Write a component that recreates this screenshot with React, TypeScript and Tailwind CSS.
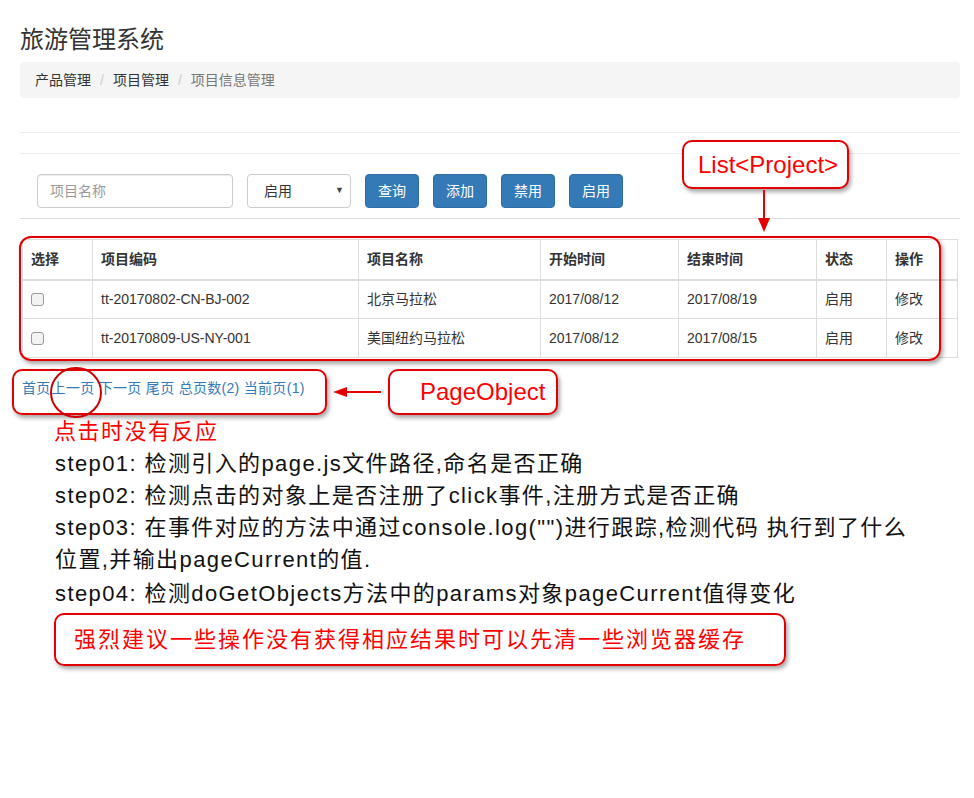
import React from 'react';

const rows = [
  { code: 'tt-20170802-CN-BJ-002', name: '北京马拉松', start: '2017/08/12', end: '2017/08/19', state: '启用' },
  { code: 'tt-20170809-US-NY-001', name: '美国纽约马拉松', start: '2017/08/12', end: '2017/08/15', state: '启用' },
];

const cols = ['w-[70px]', 'w-[266px]', 'w-[182px]', 'w-[138px]', 'w-[138px]', 'w-[70px]', 'w-[71px]'];

const steps = [
  'step01: 检测引入的page.js文件路径,命名是否正确',
  'step02: 检测点击的对象上是否注册了click事件,注册方式是否正确',
  'step03: 在事件对应的方法中通过console.log("")进行跟踪,检测代码 执行到了什么',
  '位置,并输出pageCurrent的值.',
];

export default function App() {
  return (
    <div className="relative w-[974px] min-h-[798px] bg-white text-[#333] font-['Liberation_Sans','Noto_Sans_CJK_SC',sans-serif]">
      <div className="pl-5 pr-[14px]">
        <h1 className="pt-[27px] text-[24px] leading-[26px] font-normal">旅游管理系统</h1>

        <div className="mt-[9px] flex h-9 items-center rounded bg-[#f5f5f5] px-[15px] text-[14px]">
          <span>产品管理</span>
          <span className="px-[9px] text-[#ccc]">/</span>
          <span>项目管理</span>
          <span className="px-[9px] text-[#ccc]">/</span>
          <span className="text-[#777]">项目信息管理</span>
        </div>

        <div className="mt-[34px] border-t border-[#eee]" />
        <div className="mt-5 border-t border-[#eee]" />

        <div className="flex items-center gap-[14px] pl-[17px] pt-5 pb-[10px] text-[14px]">
          <input
            className="h-[34px] w-[196px] rounded border border-[#ccc] px-3 text-[14px] placeholder:text-[#999] shadow-[inset_0_1px_1px_rgba(0,0,0,0.075)]"
            placeholder="项目名称"
          />
          <div className="flex h-[34px] w-[104px] items-center justify-between rounded border border-[#ccc] pl-4 pr-[6px]">
            <span className="text-[#333]">启用</span>
            <span className="text-[9px] text-[#444]">▼</span>
          </div>
          {['查询', '添加', '禁用', '启用'].map((b) => (
            <button key={b} className="h-[34px] w-[54px] rounded border border-[#2e6da4] bg-[#337ab7] text-[14px] text-white">
              {b}
            </button>
          ))}
        </div>

        <div className="border-t border-[#ddd]" />

        <table className="ml-[2px] mt-5 w-[935px] table-fixed border-collapse border border-[#ddd] text-[14px]">
          <colgroup>
            {cols.map((c, i) => (
              <col key={i} className={c} />
            ))}
          </colgroup>
          <thead>
            <tr className="h-[40px]">
              {['选择', '项目编码', '项目名称', '开始时间', '结束时间', '状态', '操作'].map((h) => (
                <th key={h} className="border border-[#ddd] border-b-2 px-2 text-left font-bold">
                  {h}
                </th>
              ))}
            </tr>
          </thead>
          <tbody>
            {rows.map((r) => (
              <tr key={r.code} className="h-[39px]">
                <td className="border border-[#ddd] px-2">
                  <span className="block h-[13px] w-[13px] rounded-[3px] border border-[#999] bg-[#f3f3f3]" />
                </td>
                <td className="border border-[#ddd] px-2">{r.code}</td>
                <td className="border border-[#ddd] px-2">{r.name}</td>
                <td className="border border-[#ddd] px-2">{r.start}</td>
                <td className="border border-[#ddd] px-2">{r.end}</td>
                <td className="border border-[#ddd] px-2">{r.state}</td>
                <td className="border border-[#ddd] px-2">修改</td>
              </tr>
            ))}
          </tbody>
        </table>

        <div className="ml-[2px] mt-[21px] text-[14px] leading-[18px] tracking-[0.3px] text-[#337ab7]">
          <span>首页</span>
          <span className="ml-[1px]">上一页</span> <span>下一页</span> <span>尾页</span> <span>总页数(2)</span>{' '}
          <span>当前页(1)</span>
        </div>

        <div className="pl-[34px] pt-[22px]">
          <p className="text-[22px] leading-[26px] tracking-[1.5px] text-[#f00]">点击时没有反应</p>
          <div className="pt-[3px] text-[22px] leading-[32px] text-[#111]">
            {steps.map((s) => (
              <p key={s} className="pl-px tracking-[1.4px]">
                {s}
              </p>
            ))}
            <p className="pl-px pt-[2px] tracking-[1.4px]">step04: 检测doGetObjects方法中的params对象pageCurrent值得变化</p>
          </div>
          <div className="mt-[3px] flex h-[53px] w-[732px] items-center rounded-[10px] border-2 border-[#e40000] pl-[18px] shadow-[2px_3px_4px_rgba(0,0,0,0.35)]">
            <span className="text-[22px] tracking-[2px] text-[#f00]">强烈建议一些操作没有获得相应结果时可以先清一些浏览器缓存</span>
          </div>
        </div>
      </div>

      {/* annotations */}
      <div className="absolute left-[682px] top-[140px] flex h-[49px] w-[167px] items-center rounded-[10px] border-2 border-[#e40000] bg-white pl-[14px] text-[24px] text-[#f00] shadow-[2px_3px_4px_rgba(0,0,0,0.35)]">
        List&lt;Project&gt;
      </div>
      <svg className="absolute left-[757px] top-[190px]" width="14" height="44" viewBox="0 0 14 44">
        <line x1="7" y1="0" x2="7" y2="30" stroke="#e40000" strokeWidth="2" />
        <polygon points="1,28 13,28 7,42" fill="#e40000" />
      </svg>

      <div className="absolute left-[19px] top-[236px] h-[125px] w-[922px] rounded-[12px] border-2 border-[#e40000] shadow-[2px_3px_4px_rgba(0,0,0,0.35)]" />

      <div className="absolute left-[12px] top-[369px] h-[46px] w-[315px] rounded-[10px] border-2 border-[#e40000] shadow-[2px_3px_4px_rgba(0,0,0,0.35)]" />
      <div className="absolute left-[50px] top-[367px] h-[51px] w-[52px] rounded-full border-2 border-[#d00000]" />

      <svg className="absolute left-[331px] top-[385px]" width="52" height="14" viewBox="0 0 52 14">
        <line x1="12" y1="7" x2="50" y2="7" stroke="#e40000" strokeWidth="2" />
        <polygon points="2,7 16,2 16,12" fill="#e40000" />
      </svg>

      <div className="absolute left-[388px] top-[369px] flex h-[46px] w-[170px] items-center rounded-[10px] border-2 border-[#e40000] bg-white pl-[30px] text-[24px] text-[#f00] shadow-[2px_3px_4px_rgba(0,0,0,0.35)]">
        PageObject
      </div>
    </div>
  );
}
